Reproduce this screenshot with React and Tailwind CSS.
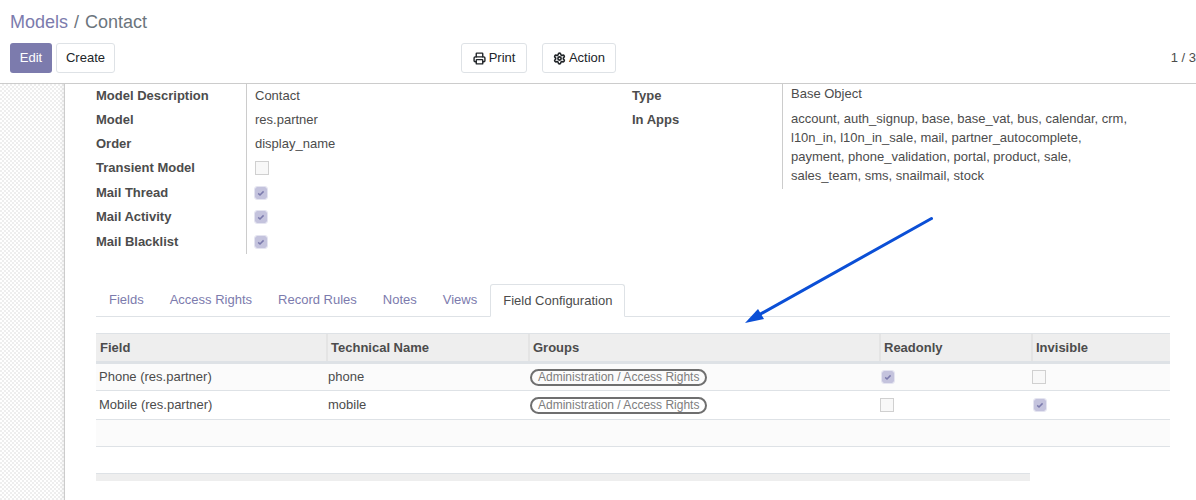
import React from 'react';
import { Printer, Settings } from 'lucide-react';

const leftRows = [
  ['Model Description', 'Contact', 'h-[24px]'],
  ['Model', 'res.partner', 'h-[24px]'],
  ['Order', 'display_name', 'h-[24px]'],
  ['Transient Model', false, 'h-[24px]'],
  ['Mail Thread', true, 'h-[25px]'],
  ['Mail Activity', true, 'h-[24px]'],
  ['Mail Blacklist', true, 'h-[25px]'],
];

const tabs = ['Fields', 'Access Rights', 'Record Rules', 'Notes', 'Views'];

const Check = ({ on }) =>
  on ? (
    <span className="flex h-[12px] w-[12px] items-center justify-center rounded-[2px] bg-[#c4c3dd] outline outline-1 outline-[#e4e4f0]">
      <svg viewBox="0 0 12 12" className="h-[12px] w-[12px]" fill="none" stroke="#7c7bad" strokeWidth="1.5">
        <path d="M3.2 6.4l1.8 1.6 3.6-3.6" />
      </svg>
    </span>
  ) : (
    <span className="block h-[14px] w-[14px] border border-[#d0d0d0] bg-[#f8f8f8]" />
  );

const Pill = () => (
  <span className="inline-block h-[17px] rounded-full border-2 border-[#6f6f6f] px-[6px] text-[12px] leading-[13px] text-[#7d7d7d]">
    Administration / Access Rights
  </span>
);

const Btn = ({ children, className = '' }) => (
  <button className={`flex h-[30px] items-center rounded-[3px] border border-[#dee2e6] bg-white text-[13px] text-[#212529] ${className}`}>
    {children}
  </button>
);

const gridCols = 'grid grid-cols-[230px_202px_351px_152px_139px]';

export default function App() {
  return (
    <div className="relative h-[500px] w-[1196px] overflow-hidden bg-white font-['Liberation_Sans',Arial,sans-serif] text-[13px] text-[#4c4c4c]">
      {/* Control panel */}
      <div className="h-[84px] border-b border-[#cccccc] bg-white">
        <div className="flex h-[43px] items-center pl-[10px] pt-[1px] text-[18px]">
          <span className="text-[#7c7bad]">Models</span>
          <span className="mx-[6px] text-[#6c757d]">/</span>
          <span className="text-[#6c757d]">Contact</span>
        </div>
        <div className="flex items-center pl-[10px]">
          <button className="flex h-[30px] w-[42px] items-center justify-center rounded-[3px] bg-[#7c7bad] text-[13px] text-white">Edit</button>
          <Btn className="ml-[4px] w-[59px] justify-center">Create</Btn>
          <Btn className="ml-[346px] w-[66px] justify-center gap-[3px]">
            <Printer size={13} strokeWidth={2.6} />
            Print
          </Btn>
          <Btn className="ml-[15px] w-[74px] justify-center gap-[3px]">
            <Settings size={13} strokeWidth={3} />
            Action
          </Btn>
          <span className="ml-auto text-[13px] text-[#4c4c4c]">1 / 3</span>
        </div>
      </div>

      <div className="flex h-[416px]">
        {/* Dotted gutter */}
        <div className="w-[64px] bg-[repeating-conic-gradient(#eeeeee_0_25%,#ffffff_0_50%)] bg-[length:4px_4px] shadow-[inset_-4px_0_4px_-3px_rgba(0,0,0,0.08)]" />

        {/* Sheet */}
        <div className="w-[1132px] border-l border-[#cccccc] pl-[31px]">
          <div className="flex">
            <div className="w-[536px] pt-[-1px]">
              {leftRows.map(([label, value, height], i) => (
                <div key={label} className={`flex ${height}`}>
                  <div className="flex w-[150px] items-center font-bold">{label}</div>
                  <div className="flex flex-1 items-center border-l border-[#cccccc] pl-[8px]">
                    {typeof value === 'string' ? value : <Check on={value} />}
                  </div>
                </div>
              ))}
            </div>
            <div className="flex">
              <div className="w-[150px] font-bold">
                <div className="flex h-[24px] items-center">Type</div>
                <div className="flex h-[24px] items-center">In Apps</div>
              </div>
              <div className="h-[105px] w-[350px] border-l border-[#cccccc] pl-[8px]">
                <div className="flex h-[20px] items-center">Base Object</div>
                <div className="mt-[5px] leading-[19px]">
                  account, auth_signup, base, base_vat, bus, calendar, crm,<br />
                  l10n_in, l10n_in_sale, mail, partner_autocomplete,<br />
                  payment, phone_validation, portal, product, sale,<br />
                  sales_team, sms, snailmail, stock
                </div>
              </div>
            </div>
          </div>

          {/* Tabs */}
          <div className="mt-[30px] flex h-[33px] w-[1074px] items-end border-b border-[#dee2e6]">
            {tabs.map((t) => (
              <div key={t} className="flex h-[32px] items-center px-[13px] text-[#7c7bad]">{t}</div>
            ))}
            <div className="relative top-[1px] flex h-[33px] items-center rounded-t-[3px] border border-[#dee2e6] border-b-white bg-white px-[12px] text-[#4c4c4c]">
              Field Configuration
            </div>
          </div>

          {/* Table */}
          <div className="mt-[16px] w-[1074px]">
            <div className={`${gridCols} h-[31px] border-t border-b-[3px] border-t-[#dee2e6] border-b-[#dee2e6] bg-[#eeeeee] font-bold`}>
              {['Field', 'Technical Name', 'Groups', 'Readonly', 'Invisible'].map((h, i) => (
                <div key={h} className={`flex items-center pl-[3px] ${i ? 'border-l-2 border-[#e4e4e4]' : 'pl-[4px]'}`}>{h}</div>
              ))}
            </div>
            <div className={`${gridCols} h-[27px] items-center border-b border-[#dee2e6] bg-[#fbfbfb]`}>
              <div className="pl-[3px]">Phone (res.partner)</div>
              <div className="pl-[2px]">phone</div>
              <div className="pl-[2px]"><Pill /></div>
              <div className="pl-[3px]"><Check on /></div>
              <div className="pl-[1px]"><Check on={false} /></div>
            </div>
            <div className={`${gridCols} h-[29px] items-center border-b border-[#dee2e6] bg-white`}>
              <div className="pl-[3px]">Mobile (res.partner)</div>
              <div className="pl-[2px]">mobile</div>
              <div className="pl-[2px]"><Pill /></div>
              <div className="pl-[1px]"><Check on={false} /></div>
              <div className="pl-[3px]"><Check on /></div>
            </div>
            <div className="h-[27px] border-b border-[#dee2e6] bg-[#fbfbfb]" />
          </div>

          {/* Scrollbar strip */}
          <div className="mt-[26px] h-[8px] w-[934px] border-t border-[#dee2e6] bg-[#eeeeee]" />
        </div>
      </div>

      {/* Annotation arrow */}
      <svg className="absolute left-0 top-0 h-[500px] w-[1196px]" viewBox="0 0 1196 500" fill="none">
        <path d="M931.5 218.5L757 316" stroke="#0b4fd6" strokeWidth="3" strokeLinecap="round" />
        <path d="M745 323L758 309L764 319Z" fill="#0b4fd6" />
      </svg>
    </div>
  );
}
